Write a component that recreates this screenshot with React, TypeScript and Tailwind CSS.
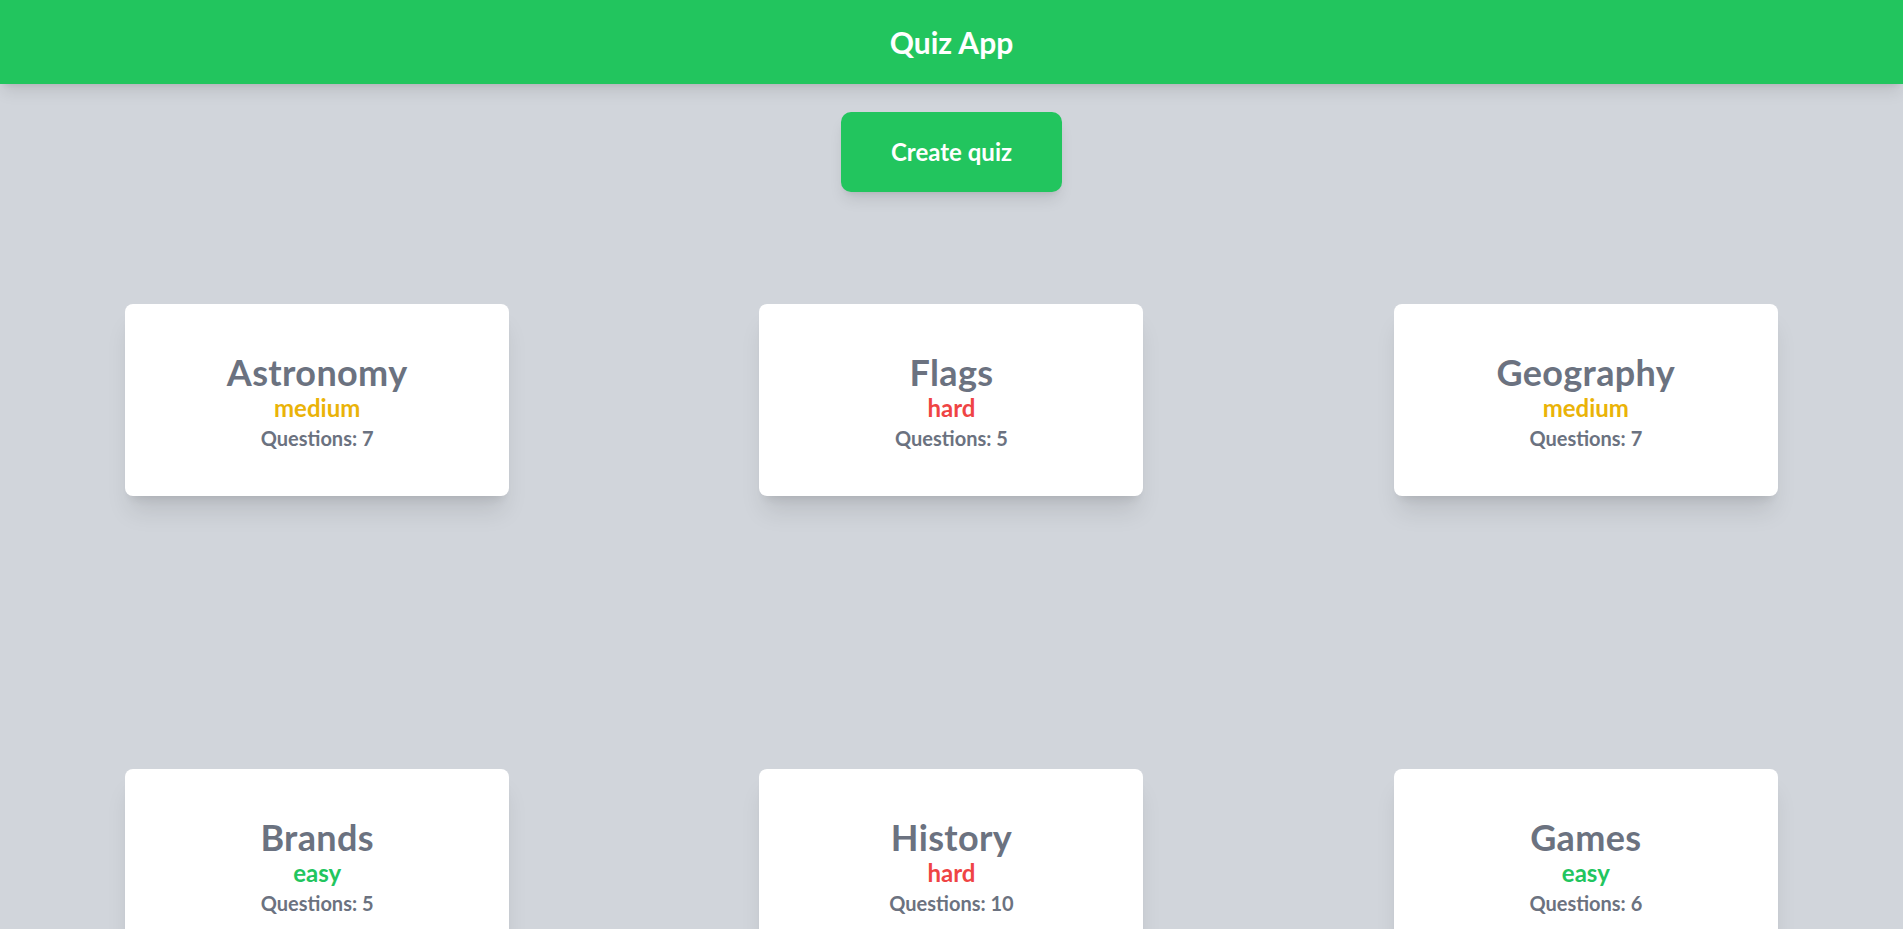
import React from "react";

type Quiz = {
  name: string;
  difficulty: "easy" | "medium" | "hard";
  questions: number;
};

const quizzes: Quiz[] = [
  { name: "Astronomy", difficulty: "medium", questions: 7 },
  { name: "Flags", difficulty: "hard", questions: 5 },
  { name: "Geography", difficulty: "medium", questions: 7 },
  { name: "Brands", difficulty: "easy", questions: 5 },
  { name: "History", difficulty: "hard", questions: 10 },
  { name: "Games", difficulty: "easy", questions: 6 },
];

const difficultyColor: Record<Quiz["difficulty"], string> = {
  easy: "text-[#22c55e]",
  medium: "text-[#eab308]",
  hard: "text-[#ef4444]",
};

const QuizCard: React.FC<{ quiz: Quiz }> = ({ quiz }) => (
  <div className="w-96 h-48 pt-1 bg-white rounded-lg shadow-xl flex flex-col items-center justify-center font-bold text-[#6b7280]">
    <h2 className="text-4xl leading-10 tracking-[0.01em]">{quiz.name}</h2>
    <p className={`text-2xl leading-8 ${difficultyColor[quiz.difficulty]}`}>
      {quiz.difficulty}
    </p>
    <p className="text-xl leading-7">Questions: {quiz.questions}</p>
  </div>
);

export default function App() {
  return (
    <div
      className="min-h-screen bg-[#d1d5db]"
      style={{ fontFamily: 'Lato, "Open Sans", sans-serif' }}
    >
      <header className="bg-[#22c55e] py-6 shadow-lg text-center relative z-10">
        <h1 className="text-3xl leading-9 font-bold text-white">Quiz App</h1>
      </header>
      <main className="flex flex-col items-center">
        <button className="mt-7 px-[50px] py-6 bg-[#22c55e] text-white text-2xl leading-8 font-bold rounded-[10px] shadow-lg">
          Create quiz
        </button>
        <div className="w-full grid grid-cols-3 justify-items-center mt-28 gap-y-[273px] pb-20">
          {quizzes.map((quiz, index) => (
            <QuizCard quiz={quiz} key={index} />
          ))}
        </div>
      </main>
    </div>
  );
}
